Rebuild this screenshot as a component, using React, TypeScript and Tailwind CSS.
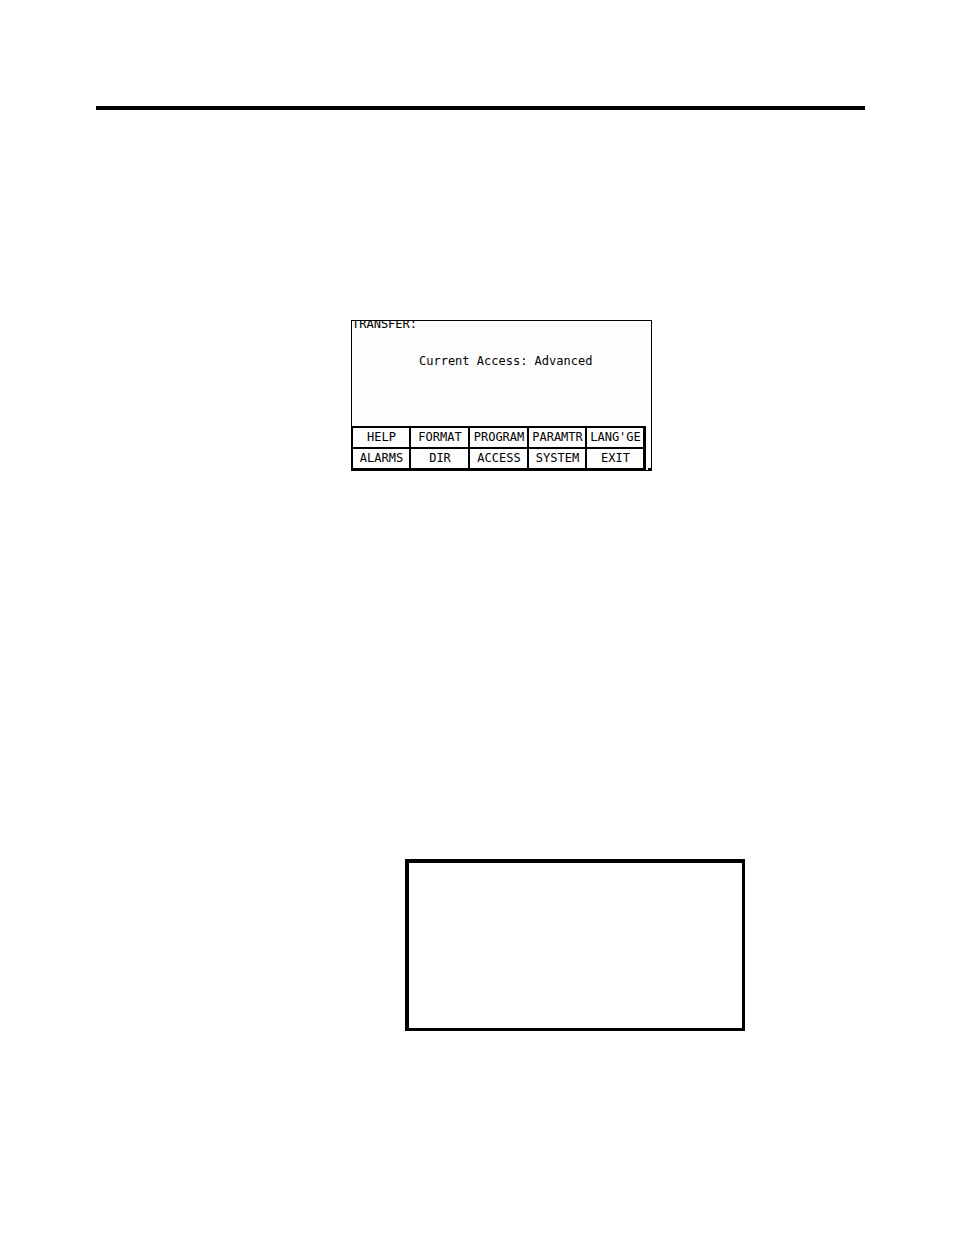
const keys = [
    "HELP", "FORMAT", "PROGRAM", "PARAMTR", "LANG'GE",
    "ALARMS", "DIR", "ACCESS", "SYSTEM", "EXIT",
];

const TransferScreen = () => {
    return (
        <section className="flex w-[301px] flex-col border border-black bg-[#fdfdfd] font-['DejaVu_Sans_Mono',monospace] text-xs leading-none text-black">
            {/* Title, cut off by the top of the display */}
            <div className="flex h-[9px] items-end overflow-hidden">
                <h1>TRANSFER:</h1>
            </div>

            <p className="pt-[25px] pb-[59px] pl-[67px] whitespace-nowrap">Current Access: Advanced</p>

            {/* Softkeys */}
            <div className="flex items-end">
                <div className="grid grid-cols-[56px_57px_57px_56px_56px] gap-0.5 bg-black pt-0.5 pr-[3px] pb-0.5 pl-px">
                    {keys.map((key) => (
                        <button key={key} type="button" className="flex h-[19px] items-center justify-center bg-[#fdfdfd] pb-0.5 pl-px">
                            {key}
                        </button>
                    ))}
                </div>
                <div className="ml-0.5 h-0.5 w-[3px] bg-black" />
            </div>
        </section>
    );
};

const App = () => {
    return (
        <main className="min-h-screen bg-white pt-[106px] pr-[89px] pb-24 pl-24">
            {/* Header rule */}
            <hr className="h-1 border-0 bg-black" />

            <div className="mt-[210px] flex pl-[255px]">
                <TransferScreen />
            </div>

            {/* Empty frame */}
            <div className="mt-[388px] mr-[120px] ml-[309px] h-[172px] border-t-4 border-r-[3px] border-b-[3px] border-l-4 border-black" />
        </main>
    );
};

export default App;
